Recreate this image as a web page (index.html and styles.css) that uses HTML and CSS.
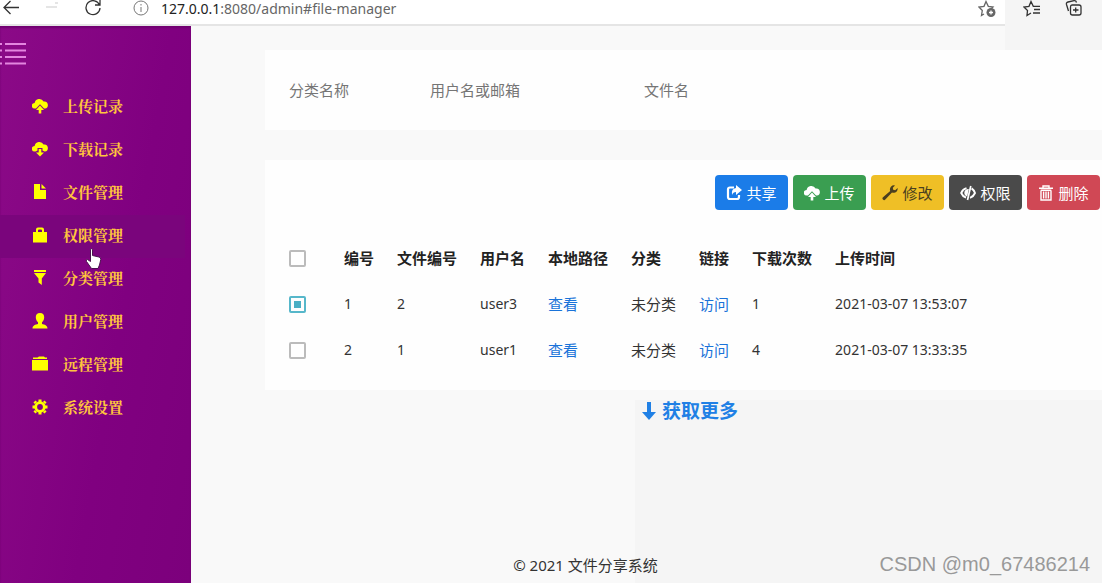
FILE: index.html
```html
<!DOCTYPE html>
<html lang="zh-CN">
<head>
<meta charset="utf-8">
<meta name="viewport" content="width=device-width, initial-scale=1">
<title>文件分享系统</title>
<link rel="stylesheet" href="styles.css">
</head>
<body>
<svg class="sprite" aria-hidden="true">
  <symbol id="cloud-up" viewBox="0 0 16 16"><path d="M4 10.500H2.600A2.700 2.700 0 0 1 2.600 5 4.800 4.800 0 0 1 11.600 3.600 3.500 3.500 0 0 1 13 10.500H12L8 6.200Z"/><path d="M8 7.600 12 12H9.300V15.500H6.700V12H4Z"/></symbol>
  <symbol id="cloud-down" viewBox="0 0 16 16"><path d="M3.500 10.500H2.600A2.700 2.700 0 0 1 2.600 5 4.800 4.800 0 0 1 11.600 3.600 3.500 3.500 0 0 1 13 10.500H12.500L10.500 9.500V7H5.500V9.500Z"/><path d="M6.700 8H9.300V11.500H12L8 15.500 4 11.500H6.700Z"/></symbol>
  <symbol id="file" viewBox="0 0 16 16"><path d="M2 0H8V6H14V15H2ZM9.500 0 14 4.600H9.500Z"/></symbol>
  <symbol id="lock" viewBox="0 0 16 16"><path fill-rule="evenodd" d="M1 5H4V2.500Q4 .5 6 .5H10Q12 .5 12 2.500V5H15V15.500H1ZM6 5H10V3.500Q10 2.500 9 2.500H7Q6 2.500 6 3.500Z"/></symbol>
  <symbol id="funnel" viewBox="0 0 16 16"><path d="M2 0H14V2H2ZM2 3H14L9.800 8.500V15L6.500 12.500V8.500Z"/></symbol>
  <symbol id="person" viewBox="0 0 16 16"><path d="M8 0C11 0 12.400 2 12.200 4.800 12 7 11 8.500 10 9.200V11C12.500 11.500 15.500 12.500 15.500 15.500H.5C.5 12.500 3.500 11.500 6 11V9.200C5 8.500 4 7 3.800 4.800 3.600 2 5 0 8 0Z"/></symbol>
  <symbol id="folder" viewBox="0 0 16 16"><path d="M1 3V1.500H5.500L7 .5H12L13 1.500H15V3ZM0 4H16V14.500H0Z"/></symbol>
  <symbol id="gear" viewBox="0 0 16 16"><path fill="none" stroke="currentColor" stroke-width="2.800" d="M12.300 8A4.300 4.300 0 1 1 3.700 8 4.300 4.300 0 1 1 12.300 8Z"/><path stroke="currentColor" stroke-width="3" d="M8 .5V3M8 13V15.500M.5 8H3M13 8H15.500M2.500 2.500 4 4M12 12 13.500 13.500M2.500 13.500 4 12M12 4 13.500 2.500"/></symbol>
  <symbol id="share" viewBox="0 0 16 16"><path fill="none" stroke="currentColor" stroke-width="2.200" d="M8 2.500H4Q2 2.500 2 4.500V12Q2 14 4 14H11Q13 14 13 12V10"/><path d="M10 0 16 5 10 10V7Q7 7 6 10 5 3.500 10 3Z"/></symbol>
  <symbol id="wrench" viewBox="0 0 16 16"><path d="M15.600 3A4.200 4.200 0 0 1 10 7.600L3.300 14.600A1.600 1.600 0 0 1 1 12.300L8.200 6A4.200 4.200 0 0 1 13 .4L10.800 2.800 11.200 4.800 13.200 5.200Z"/></symbol>
  <symbol id="eye-off" viewBox="0 0 16 16"><path fill="none" stroke="currentColor" stroke-width="1.900" d="M6.500 3.200C4 3.800 2.200 5.700 1.200 8 2.200 10.300 4 12 6 12.700M11.600 3.400C13.200 4.500 14.300 6 15 8 14 10.300 12.400 12 10 12.900"/><path stroke="currentColor" stroke-width="1.700" d="M10.800 1 7.500 15"/><path d="M8.800 4C6 3.800 4.200 5.800 4.300 8 4.400 9.800 5.500 11 7.200 11.500Z"/></symbol>
  <symbol id="trash" viewBox="0 0 16 16"><path fill="none" stroke="currentColor" stroke-width="1.400" d="M1 3.200H15M5 3V1H11V3M2.700 5.200H13.300M3 5.500V15H13V5.500M5.600 6.500V13.500M8 6.500V13.500M10.400 6.500V13.500"/></symbol>
  <symbol id="arrow-down" viewBox="0 0 14 18"><path d="M5 0H9V10H14L7 18 0 10H5Z"/></symbol>
</svg>

<header class="browser">
  <button class="nav-button" aria-label="返回"><svg viewBox="0 0 16 16"><path d="M16 7.500H1M7.500 1 1 7.500 7.500 14"/></svg></button>
  <button class="nav-button faint" aria-label="前进"><svg viewBox="0 0 16 16"><path d="M2 7H13M11 3H14"/></svg></button>
  <button class="nav-button" aria-label="刷新"><svg viewBox="0 0 16 16"><path d="M14.500 5A7 7 0 1 0 15 8M15 0V5H10"/></svg></button>
  <div class="address">
    <svg class="info" viewBox="0 0 16 16"><circle cx="8" cy="8" r="7"/><path d="M8 7V12M8 4V5.500"/></svg>
    <span class="url"><b>127.0.0.1</b>:8080/admin#file-manager</span>
    <button class="nav-button muted" aria-label="收藏"><svg viewBox="0 0 18 18"><path d="M6 14 3.500 15.500 4.300 10.500 1 7 6 6.300 8 1.500 10.300 6.300 15 7 13.500 8.500"/><circle class="solid" cx="13" cy="12.500" r="4.500"/><path class="plus" d="M13 10.500V14.500M11 12.500H15"/></svg></button>
  </div>
  <div class="tools">
    <button class="nav-button" aria-label="收藏夹"><svg viewBox="0 0 18 18"><path d="M8 13 4 15.500 4.500 10.500 1 7 6 6.300 8 1.500 10.300 6.300H17M11 9.500H17M10 13H17"/></svg></button>
    <button class="nav-button" aria-label="集锦"><svg viewBox="0 0 18 18"><path d="M7 5H14Q16 5 16 7V13Q16 15 14 15H7.500Q5.500 15 5.500 13V7Q5.500 5 7 5M10.700 7.500V12.500M8 10H13.500M3.500 11 1.500 4.500Q1 2.500 3 2L9 .7Q11 .4 11.500 2.500"/></svg></button>
  </div>
</header>

<div class="layout">
  <aside class="sidebar">
    <button class="toggle" aria-label="菜单"><svg viewBox="0 0 27 24"><path d="M0 2H2M5 2H26M0 8.500H2M5 8.500H26M0 15H2M5 15H26M0 21.500H2M5 21.500H26"/></svg></button>
    <nav class="menu">
      <a href="#upload-log"><svg><use href="#cloud-up"/></svg>上传记录</a>
      <a href="#download-log"><svg><use href="#cloud-down"/></svg>下载记录</a>
      <a href="#file-manager"><svg><use href="#file"/></svg>文件管理</a>
      <a href="#permission" class="hovered"><svg><use href="#lock"/></svg>权限管理</a>
      <a href="#category"><svg><use href="#funnel"/></svg>分类管理</a>
      <a href="#user"><svg><use href="#person"/></svg>用户管理</a>
      <a href="#remote"><svg><use href="#folder"/></svg>远程管理</a>
      <a href="#settings"><svg><use href="#gear"/></svg>系统设置</a>
    </nav>
  </aside>

  <main class="main">
    <form class="card filters">
      <input type="text" placeholder="分类名称" aria-label="分类名称">
      <input type="text" placeholder="用户名或邮箱" aria-label="用户名或邮箱">
      <input type="text" placeholder="文件名" aria-label="文件名">
    </form>

    <section class="card files">
      <div class="actions">
        <button class="btn share"><svg><use href="#share"/></svg>共享</button>
        <button class="btn upload"><svg><use href="#cloud-up"/></svg>上传</button>
        <button class="btn edit"><svg><use href="#wrench"/></svg>修改</button>
        <button class="btn permit"><svg><use href="#eye-off"/></svg>权限</button>
        <button class="btn delete"><svg><use href="#trash"/></svg>删除</button>
      </div>
      <table>
        <thead>
          <tr><th class="pick"><input type="checkbox" aria-label="全选"></th><th>编号</th><th>文件编号</th><th>用户名</th><th>本地路径</th><th>分类</th><th>链接</th><th>下载次数</th><th>上传时间</th></tr>
        </thead>
        <tbody>
          <tr><td class="pick"><input type="checkbox" aria-label="选择 1" checked></td><td class="latin">1</td><td class="latin">2</td><td class="latin">user3</td><td><a href="#path-1">查看</a></td><td>未分类</td><td><a href="#link-1">访问</a></td><td class="latin">1</td><td class="latin">2021-03-07 13:53:07</td></tr>
          <tr><td class="pick"><input type="checkbox" aria-label="选择 2"></td><td class="latin">2</td><td class="latin">1</td><td class="latin">user1</td><td><a href="#path-2">查看</a></td><td>未分类</td><td><a href="#link-2">访问</a></td><td class="latin">4</td><td class="latin">2021-03-07 13:33:35</td></tr>
        </tbody>
      </table>
    </section>

    <div class="lower">
      <a class="more" href="#more"><svg><use href="#arrow-down"/></svg>获取更多</a>
      <footer>© 2021 文件分享系统</footer>
    </div>
  </main>
</div>

<svg class="cursor" viewBox="0 0 17 21" aria-hidden="true"><path d="M5.500 1.500Q6.500 0 7.500 1.500V7.500L14 9Q16 9.500 15.800 11.500L14.500 17 13 20.500H6.500L1.500 13.500Q.5 11.500 2.500 11.500L5.500 13.500Z"/></svg>
<div class="watermark">CSDN @m0_67486214</div>
</body>
</html>
```

FILE: styles.css
```css
* { box-sizing: border-box; }

body {
  margin: 0;
  min-height: 100vh;
  display: flex;
  flex-direction: column;
  position: relative;
  background: #f9f9f9;
  color: #333;
  font: 15px/22px "Noto Sans", "Noto Sans CJK SC", sans-serif;
}

button, input { font: inherit; }
svg { fill: currentColor; flex: none; }
a { color: #1a73d9; text-decoration: none; }
.sprite { position: absolute; width: 0; height: 0; }

/* Browser bar */
.browser {
  display: flex;
  height: 26px;
  padding-left: 3px;
  gap: 25px;
  align-items: flex-start;
  background: #fff;
  border-bottom: 2px solid #e5e5e5;
}
.nav-button {
  display: flex;
  padding: 0;
  border: 0;
  background: none;
  color: #333;
}
.nav-button svg {
  width: 16px;
  height: 16px;
  fill: none;
  stroke: currentColor;
  stroke-width: 1.3;
}
.faint { color: #ddd; }
.muted { color: #666; }
.nav-button .solid { fill: currentColor; stroke: none; }
.nav-button .plus { stroke: #fff; }
.address {
  flex: 1;
  display: flex;
  align-items: flex-start;
  padding: 0 9px 0 7px;
  gap: 12px;
}
.info {
  width: 16px;
  height: 16px;
  fill: none;
  stroke: #777;
}
.url {
  flex: 1;
  font-size: 14px;
  line-height: 18px;
  color: #666;
}
.url b { font-weight: 400; color: #222; }
.address .nav-button svg,
.tools .nav-button svg { width: 18px; height: 18px; }
.tools {
  display: flex;
  gap: 24px;
  width: 97px;
  height: 50px;
  margin-left: -25px;
  padding-left: 18px;
  align-items: flex-start;
  background: #f5f5f5;
}

.layout { flex: 1; display: flex; }

/* Sidebar */
.sidebar {
  flex: none;
  width: 191px;
  padding: 16px 6px 0 0;
  background: linear-gradient(100deg, #8b0a87, #800080 60%, #7c007c);
  box-shadow: inset 0 2px 2px #700070;
}
.toggle {
  display: flex;
  padding: 0;
  border: 0;
  background: none;
  color: #e386df;
}
.toggle svg {
  width: 27px;
  height: 24px;
  stroke: currentColor;
  stroke-width: 2;
}
.menu {
  display: flex;
  flex-direction: column;
  padding-top: 20px;
}
.menu a {
  display: flex;
  align-items: center;
  gap: 15px;
  height: 43px;
  padding: 0 0 4px 32px;
  color: #ffc53d;
  font-family: "Noto Serif CJK SC", "Noto Sans CJK SC", serif;
  font-weight: 700;
}
.menu svg { width: 16px; height: 16px; color: #ff0; }
.menu .hovered { background: #7a057c; }

/* Content */
.main {
  flex: 1;
  min-width: 0;
  display: flex;
  flex-direction: column;
  padding-top: 24px;
}
.card { margin-left: 74px; background: #fefefe; }
.filters {
  display: grid;
  grid-template-columns: 129px 202px minmax(0, 1fr);
  gap: 12px;
  padding: 22px 12px;
}
.filters input {
  min-width: 0;
  height: 36px;
  padding: 0 12px;
  border: 0;
  background: none;
}
.filters input::placeholder { color: #757575; opacity: 1; }
.files {
  margin-top: 30px;
  padding: 15px 2px 17px 12px;
}
.actions {
  display: flex;
  justify-content: flex-end;
  gap: 5px;
  margin-bottom: 25px;
}
.btn {
  display: flex;
  align-items: center;
  justify-content: center;
  gap: 4px;
  width: 73px;
  height: 35px;
  padding: 0;
  border: 0;
  border-radius: 4px;
  color: #fff;
}
.btn svg { width: 16px; height: 16px; }
.share { background: #1b7ce8; }
.upload { background: #3a9e51; }
.edit { background: #efbf26; color: #4a3f20; }
.permit { background: #4a4a4a; }
.delete { background: #d04855; }

table { border-collapse: collapse; white-space: nowrap; }
th, td {
  height: 46px;
  padding: 0 12px 0 11px;
  text-align: left;
}
th { color: #222; font-weight: 700; }
.latin { font-size: 14px; }
th.pick, td.pick { width: 56px; padding-left: 12px; }
.pick input {
  appearance: none;
  display: block;
  width: 17px;
  height: 17px;
  margin: 0;
  border: 2px solid #bbb;
  border-radius: 2px;
}
.pick input:checked {
  border-color: #56b7ca;
  background: #4aafc4 content-box;
  padding: 3px;
}

.lower {
  flex: 1;
  display: flex;
  flex-direction: column;
  justify-content: space-between;
  margin-top: 10px;
  background: linear-gradient(90deg, #f9f9f9 444px, #f5f5f5 444px);
}
.more {
  display: flex;
  align-items: center;
  justify-content: center;
  gap: 6px;
  padding-left: 87px;
  color: #2080e5;
  font-size: 19px;
  font-weight: 700;
}
.more svg { width: 14px; height: 18px; }
footer {
  padding: 0 122px 7px 0;
  text-align: center;
}

/* Overlays */
.cursor {
  position: absolute;
  left: 85px;
  top: 248px;
  width: 17px;
  height: 21px;
  fill: #fff;
  stroke: #4b124f;
}
.watermark {
  position: absolute;
  right: 12px;
  bottom: 8px;
  color: #999;
  font: 20px/22px "Liberation Sans", sans-serif;
}
```
